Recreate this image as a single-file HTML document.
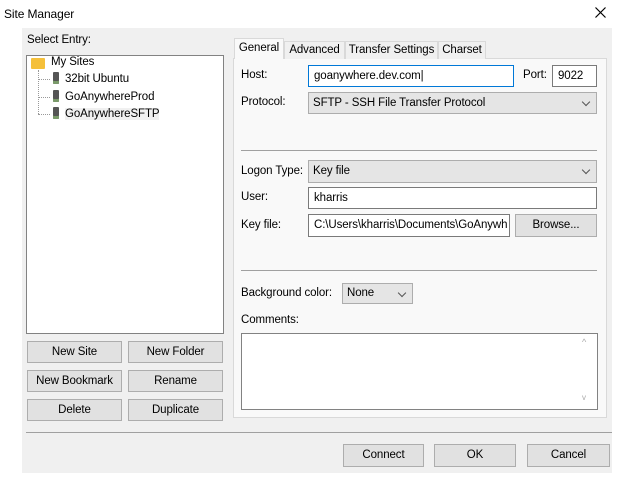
<!DOCTYPE html>
<html><head><style>
*{box-sizing:border-box;margin:0;padding:0}
body{width:624px;height:483px;background:#fff;font-family:"Liberation Sans",sans-serif;font-size:11.5px;color:#000;position:relative;overflow:hidden;letter-spacing:-0.1px}
.a{position:absolute}
.body{left:22px;top:28px;width:590px;height:445px;background:#f0f0f0}
.btn{position:absolute;background:#e1e1e1;border:1px solid #adadad;text-align:center;line-height:20px}
.inp{position:absolute;background:#fff;border:1px solid #7a7a7a;padding-left:5px;line-height:20px;white-space:nowrap;overflow:hidden}
.sel{position:absolute;background:#e5e5e5;border:1px solid #adadad;padding-left:4px;line-height:20px}
.sel:after{content:"";position:absolute;right:7px;top:6px;width:5px;height:5px;border-right:1px solid #555;border-bottom:1px solid #555;transform:rotate(45deg)}
.hr{position:absolute;height:1px;background:#a0a0a0}
.tab{position:absolute;top:41px;height:18px;background:#f0f0f0;border:1px solid #d9d9d9;border-bottom:none;text-align:center;line-height:17px}
.srv{display:inline-block;width:6px;height:12px;background:#555;border-radius:1px;vertical-align:-2px;margin-right:6px;box-shadow:inset 0 -3px #7a9a6a}
</style></head><body>
<div class="a" style="left:4px;top:7px;font-size:12px">Site Manager</div>
<svg class="a" style="left:595px;top:7px" width="11" height="11"><path d="M0.5 0.5L10.5 10.5M10.5 0.5L0.5 10.5" stroke="#000" stroke-width="1.2"/></svg>
<div class="a body"></div>
<div class="a" style="left:27px;top:34px">Select Entry:</div>
<div class="a" style="left:26px;top:55px;width:198px;height:279px;background:#fff;border:1px solid #828282"></div>
<div class="a" style="left:31px;top:58px;width:14px;height:11px;background:#f5c03a;border-radius:1px"></div>
<div class="a" style="left:51px;top:56px">My Sites</div>
<div class="a" style="left:38px;top:70px;width:1px;height:44px;border-left:1px dotted #999"></div>
<div class="a" style="left:38px;top:79px;width:12px;border-top:1px dotted #999"></div>
<div class="a" style="left:38px;top:97px;width:12px;border-top:1px dotted #999"></div>
<div class="a" style="left:38px;top:114px;width:12px;border-top:1px dotted #999"></div>
<div class="a" style="left:53px;top:72px"><span class="srv"></span>32bit Ubuntu</div>
<div class="a" style="left:53px;top:90px"><span class="srv"></span>GoAnywhereProd</div>
<div class="a" style="left:53px;top:107px"><span class="srv"></span><span style="background:#f0f0f0">GoAnywhereSFTP</span></div>
<div class="btn" style="left:27px;top:341px;width:95px;height:22px">New Site</div>
<div class="btn" style="left:128px;top:341px;width:95px;height:22px">New Folder</div>
<div class="btn" style="left:27px;top:370px;width:95px;height:22px">New Bookmark</div>
<div class="btn" style="left:128px;top:370px;width:95px;height:22px">Rename</div>
<div class="btn" style="left:27px;top:399px;width:95px;height:22px">Delete</div>
<div class="btn" style="left:128px;top:399px;width:95px;height:22px">Duplicate</div>
<div class="a" style="left:233px;top:58px;width:374px;height:360px;background:#f9f9f9;border:1px solid #d9d9d9"></div>
<div class="tab" style="left:284px;width:61px">Advanced</div>
<div class="tab" style="left:345px;width:93px">Transfer Settings</div>
<div class="tab" style="left:438px;width:48px">Charset</div>
<div class="a" style="left:234px;top:38px;width:50px;height:21px;background:#f9f9f9;border:1px solid #d9d9d9;border-bottom:none;text-align:center;line-height:19px">General</div>
<div class="a" style="left:241px;top:69px">Host:</div>
<div class="inp" style="left:308px;top:65px;width:206px;height:22px;border-color:#0078d7">goanywhere.dev.com|</div>
<div class="a" style="left:523px;top:69px">Port:</div>
<div class="inp" style="left:552px;top:65px;width:45px;height:22px">9022</div>
<div class="a" style="left:241px;top:96px">Protocol:</div>
<div class="sel" style="left:308px;top:92px;width:289px;height:22px">SFTP - SSH File Transfer Protocol</div>
<div class="hr" style="left:241px;top:150px;width:356px"></div>
<div class="a" style="left:241px;top:165px">Logon Type:</div>
<div class="sel" style="left:308px;top:160px;width:289px;height:23px">Key file</div>
<div class="a" style="left:241px;top:191px">User:</div>
<div class="inp" style="left:308px;top:187px;width:289px;height:22px">kharris</div>
<div class="a" style="left:241px;top:219px">Key file:</div>
<div class="inp" style="left:308px;top:214px;width:202px;height:23px;line-height:21px">C:\Users\kharris\Documents\GoAnywh</div>
<div class="btn" style="left:515px;top:214px;width:82px;height:23px;line-height:21px">Browse...</div>
<div class="hr" style="left:241px;top:270px;width:356px"></div>
<div class="a" style="left:241px;top:287px">Background color:</div>
<div class="sel" style="left:342px;top:283px;width:71px;height:21px;line-height:19px">None</div>
<div class="a" style="left:241px;top:314px">Comments:</div>
<div class="a" style="left:241px;top:333px;width:357px;height:77px;background:#fff;border:1px solid #828282"></div>
<div class="a" style="left:582px;top:337px;font-size:9px;color:#aaa">^</div>
<div class="a" style="left:582px;top:393px;font-size:8px;color:#aaa">v</div>
<div class="hr" style="left:26px;top:432px;width:586px"></div>
<div class="btn" style="left:343px;top:444px;width:81px;height:23px;line-height:21px">Connect</div>
<div class="btn" style="left:434px;top:444px;width:82px;height:23px;line-height:21px">OK</div>
<div class="btn" style="left:527px;top:444px;width:83px;height:23px;line-height:21px">Cancel</div>
</body></html>
